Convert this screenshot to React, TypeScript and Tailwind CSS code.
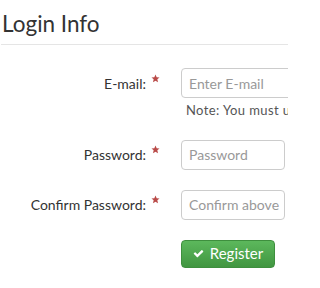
import React from "react";

function Star() {
  return (
    <svg viewBox="0 0 24 24" className="w-[9px] h-[9px] ml-[5px] mb-[10px]" fill="#b94a48">
      <path d="M12 1.5l3.1 7.1 7.6.6-5.8 5 1.8 7.5L12 17.8l-6.7 3.9 1.8-7.5-5.8-5 7.6-.6z" />
    </svg>
  );
}

function Row({ label, children, className }: { label: string; children: React.ReactNode; className?: string }) {
  return (
    <div className={"flex items-start " + (className ?? "")}>
      <div className="w-[181px] shrink-0 flex justify-end pr-[21px] h-[30px] items-center">
        <span className="text-[14px] text-[#333]">{label}</span>
        <Star />
      </div>
      {children}
    </div>
  );
}

export default function App() {
  return (
    <div className="w-[288px] h-[288px] overflow-hidden bg-white font-['Lato','Open_Sans',sans-serif] text-[#333]">
      <div className="border-b border-[#e5e5e5] ml-[1px] h-[45px] flex items-end pb-[9px]">
        <h3 className="text-[22.5px] leading-none pl-[1px] text-[#333]">Login Info</h3>
      </div>

      <Row label="E-mail:" className="mt-[23px]">
        <div className="shrink-0">
          <input
            className="w-[200px] h-[30px] border border-[#ccc] rounded-[4px] px-[7px] text-[14px] placeholder:text-[#999] outline-none"
            placeholder="Enter E-mail"
          />
          <div className="text-[13px] text-[#555] mt-[3px] pl-[5px] whitespace-nowrap tracking-[0.4px]">Note: You must use a valid e-mail</div>
        </div>
      </Row>

      <Row label="Password:" className="mt-[19px]">
        <input
          type="password"
          className="w-[104px] h-[30px] border border-[#ccc] rounded-[4px] px-[7px] text-[14px] placeholder:text-[#999] outline-none"
          placeholder="Password"
        />
      </Row>

      <Row label="Confirm Password:" className="mt-[20px]">
        <input
          type="password"
          className="w-[104px] h-[30px] border border-[#ccc] rounded-[4px] pl-[7px] pr-[4px] text-[14px] placeholder:text-[#999] outline-none"
          placeholder="Confirm above"
        />
      </Row>

      <div className="mt-[20px] pl-[181px]">
        <button className="w-[94px] h-[28px] rounded-[4px] border border-[#3e8f3e] bg-gradient-to-b from-[#5cb85c] to-[#419641] text-white text-[15px] flex items-center justify-center gap-[6px]">
          <svg viewBox="0 0 1792 1792" className="w-[11px] h-[11px]" fill="white">
            <path d="M1671 566q0 40-28 68l-724 724-136 136q-28 28-68 28t-68-28l-136-136-362-362q-28-28-28-68t28-68l136-136q28-28 68-28t68 28l294 295 656-657q28-28 68-28t68 28l136 136q28 28 28 68z" />
          </svg>
          Register
        </button>
      </div>
    </div>
  );
}
